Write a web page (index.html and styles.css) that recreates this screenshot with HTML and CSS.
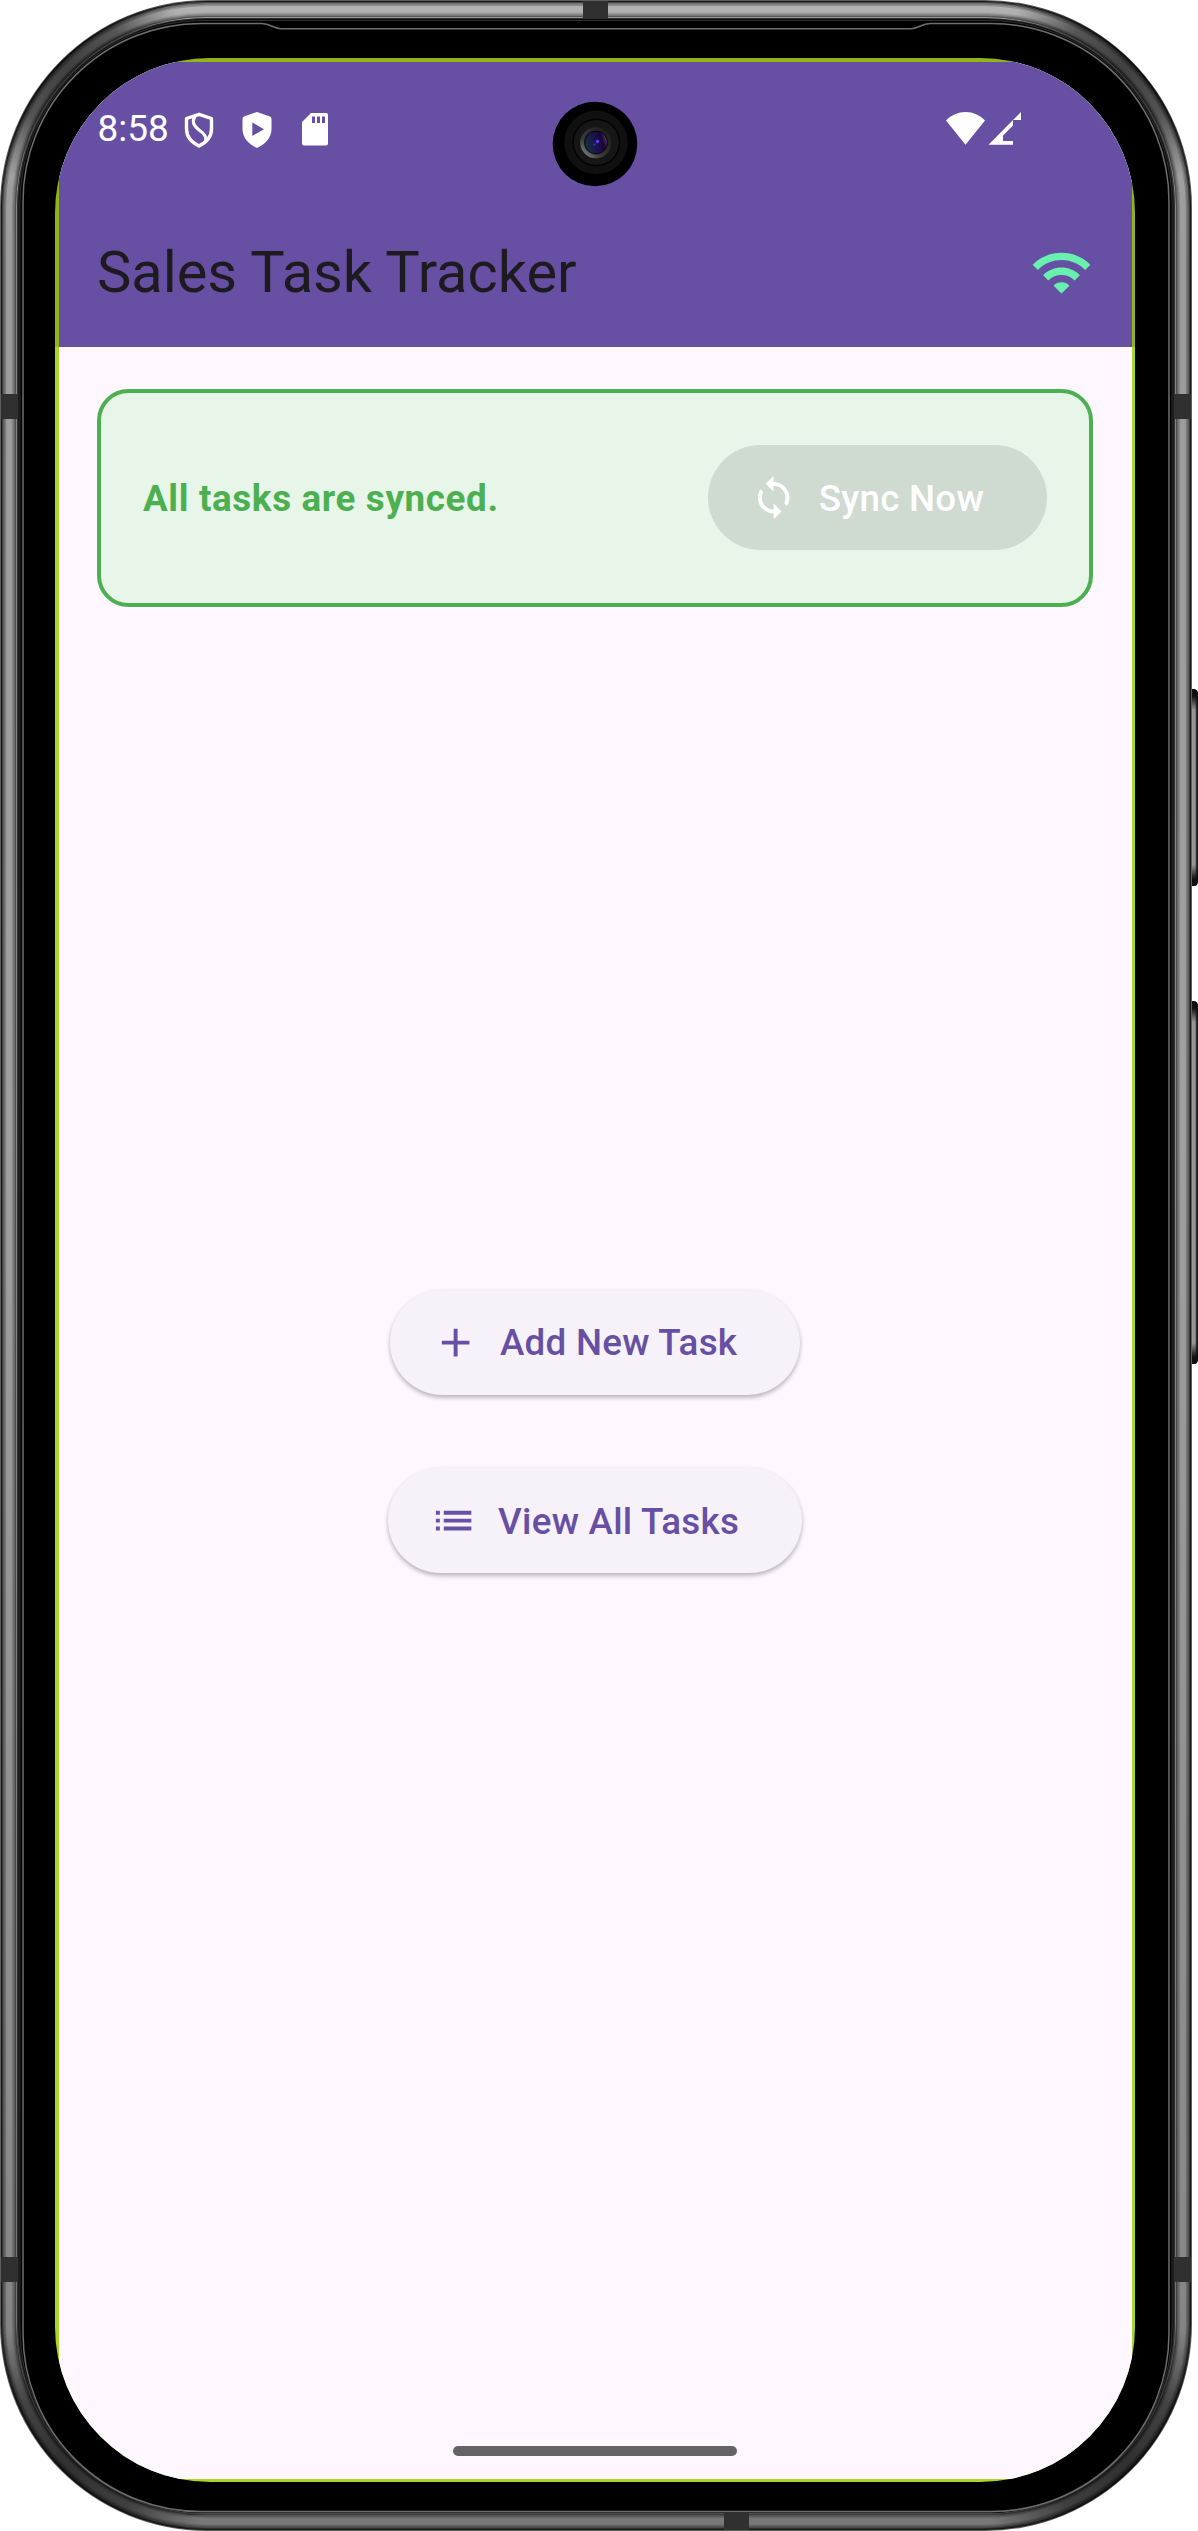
FILE: index.html
```html
<!DOCTYPE html>
<html lang="en">
<head>
<meta charset="utf-8">
<title>Sales Task Tracker</title>
<link rel="stylesheet" href="styles.css">
</head>
<body>
<div class="phone">
  <svg class="frame" viewBox="0 0 1198 2531" aria-hidden="true">
    <defs>
      <linearGradient id="metal" x1="0" y1="0" x2="0" y2="1">
        <stop offset="0" stop-color="#b6b6b6"/>
        <stop offset=".012" stop-color="#a4a4a4"/>
        <stop offset=".1" stop-color="#9c9c9c"/>
        <stop offset=".45" stop-color="#a0a0a0"/>
        <stop offset=".9" stop-color="#888"/>
        <stop offset="1" stop-color="#787878"/>
      </linearGradient>
      <radialGradient id="shade">
        <stop offset="0" stop-color="#000" stop-opacity=".62"/>
        <stop offset=".5" stop-color="#000" stop-opacity=".48"/>
        <stop offset="1" stop-color="#000" stop-opacity="0"/>
      </radialGradient>
      <clipPath id="shell"><rect x="1" y="0" width="1190.5" height="2530.5" rx="207"/></clipPath>
      <linearGradient id="key" x1="0" x2="1" y1="0" y2="0">
        <stop offset="0" stop-color="#555"/><stop offset=".2" stop-color="#9a9a9a"/>
        <stop offset=".65" stop-color="#929292"/><stop offset=".8" stop-color="#333"/><stop offset="1" stop-color="#111"/>
      </linearGradient>
      <linearGradient id="capTop" x1="0" x2="0" y1="0" y2="1">
        <stop offset="0" stop-color="#0a0a0a"/><stop offset=".35" stop-color="#111"/><stop offset="1" stop-color="#111" stop-opacity="0"/>
      </linearGradient>
      <linearGradient id="capBottom" x1="0" x2="0" y1="1" y2="0">
        <stop offset="0" stop-color="#0a0a0a"/><stop offset=".35" stop-color="#111"/><stop offset="1" stop-color="#111" stop-opacity="0"/>
      </linearGradient>
    </defs>
    <path d="M1190 689h4q4 0 4 6v185q0 6-4 6h-4zM1190 1001h4q4 0 4 6v351q0 6-4 6h-4z" fill="url(#key)"/>
    <path d="M1190 689h4q4 0 4 6v15h-8z" fill="url(#capTop)"/>
    <path d="M1190 1001h4q4 0 4 6v15h-8z" fill="url(#capTop)"/>
    <path d="M1190 886h4q4 0 4-6v-15h-8z" fill="url(#capBottom)"/>
    <path d="M1190 1364h4q4 0 4-6v-15h-8z" fill="url(#capBottom)"/>
    <rect x="0" y="0" width="1192" height="2531" rx="207" fill="#5c605c"/>
    <rect x="1" y="1" width="1190" height="2529" rx="206" fill="#1c1c1c"/>
    <g clip-path="url(#shell)">
      <rect x="2" y="2" width="1188" height="2527" rx="205" fill="url(#metal)"/>
      <g fill="none" stroke="#000" stroke-width="1.600">
        <rect x="2.500" y="2.500" width="1187" height="2526" rx="204.500" stroke-opacity=".6"/>
        <rect x="4" y="4" width="1184" height="2523" rx="203" stroke-opacity=".35"/>
        <rect x="5.500" y="5.500" width="1181" height="2520" rx="201.500" stroke-opacity=".18"/>
        <rect x="12.500" y="13.500" width="1167" height="2504" rx="194" stroke-opacity=".12"/>
        <rect x="14" y="15" width="1164" height="2501" rx="192" stroke-opacity=".28"/>
        <rect x="15.500" y="16.500" width="1161" height="2498" rx="190" stroke-opacity=".5"/>
      </g>
      <circle cx="60" cy="60" r="125" fill="url(#shade)"/>
      <circle cx="1132" cy="60" r="125" fill="url(#shade)"/>
      <circle cx="60" cy="2471" r="150" fill="url(#shade)"/>
      <circle cx="1132" cy="2471" r="150" fill="url(#shade)"/>
    </g>
    <g fill="#303030">
      <rect x="583" y="1" width="25" height="19"/>
      <rect x="724" y="2513" width="25" height="17"/>
      <rect x="1" y="394" width="18" height="25"/><rect x="1173" y="394" width="18" height="25"/>
      <rect x="1" y="2257" width="18" height="25"/><rect x="1173" y="2257" width="18" height="25"/>
    </g>
    <rect x="17" y="18" width="1158" height="2495.500" rx="188" fill="#303030"/>
    <rect x="18.500" y="19" width="1155" height="2494" rx="186" fill="#0b0b0b"/>
    <rect x="20" y="20.500" width="1152" height="2491.500" rx="183" fill="#000" stroke="#3a3a3a" stroke-width=".8"/>
    <path d="M201 23.500H262C270 23.500 274 28.700 281 28.700H911C918 28.700 922 23.500 930 23.500H991A178 178 0 0 1 1169 201.500V2333.500A178 178 0 0 1 991 2511.500H201A178 178 0 0 1 23 2333.500V201.500A178 178 0 0 1 201 23.500Z" fill="#000" stroke="#6e6e6e" stroke-width="1.500"/>
  </svg>

  <div class="screen">
    <div class="app">
      <header class="header">
        <div class="statusbar">
          <span class="clock">8:58</span>
          <svg class="st-icon st-shield" viewBox="0 0 30 36"><path d="M15 2.300 27.500 6.500V17C27.500 25 22 30.500 15 34 8 30.500 2.500 25 2.500 17V6.500Z" fill="none" stroke="#fff" stroke-width="3.400" stroke-linejoin="round"/><path d="M12 3C7.500 9 9 13 15 18 21 22 23 25 21.500 29" fill="none" stroke="#fff" stroke-width="3.200"/></svg>
          <svg class="st-icon st-play" viewBox="0 0 30 36"><path fill="#fff" fill-rule="evenodd" d="M15 0 28 4.500Q29.500 5 29.500 7V17C29.500 26 23 32.500 15 36 7 32.500.5 26 .5 17V7Q.5 5 2 4.500ZM10.300 10.500V24L22 17.200Z"/></svg>
          <svg class="st-icon st-card" viewBox="0 0 26 33"><path fill="#fff" fill-rule="evenodd" d="M9 0H24Q26 0 26 2V30.500Q26 32.500 24 32.500H2Q0 32.500 0 30.500V9ZM10 3.500V10H13V3.500ZM15 3.500V10H18V3.500ZM20 3.500V10H23V3.500Z"/></svg>
          <svg class="st-signal" viewBox="0 0 75 33"><path fill="#fff" d="M0 8.500Q8 0 19.500 0 31 0 39 8.500L19.500 32.700ZM75 0V8H67V13.500L57 23.500V29H67V32.700H42.500Z"/></svg>
        </div>
        <div class="appbar">
          <h1 class="title">Sales Task Tracker</h1>
          <svg class="wifi" viewBox="0 0 24 24"><path fill="#69F0AE" d="m1 9 2 2c4.970-4.970 13.030-4.970 18 0l2-2C16.930 2.930 7.080 2.930 1 9zm8 8 3 3 3-3c-1.650-1.660-4.340-1.660-6 0zm-4-4 2 2c2.760-2.760 7.240-2.760 10 0l2-2C15.140 9.140 8.870 9.140 5 13z"/></svg>
        </div>
      </header>

      <section class="card">
        <span class="card-text">All tasks are synced.</span>
        <button class="btn btn-sync" disabled>
          <svg class="icon" viewBox="0 0 24 24"><path fill="currentColor" d="M12 4V1L8 5l4 4V6c3.310 0 6 2.690 6 6 0 1.010-.25 1.970-.7 2.800l1.460 1.460C19.540 15.030 20 13.570 20 12c0-4.420-3.580-8-8-8zm0 14c-3.310 0-6-2.690-6-6 0-1.010.25-1.970.7-2.800L5.240 7.740C4.460 8.970 4 10.430 4 12c0 4.420 3.580 8 8 8v3l4-4-4-4v3z"/></svg>
          <span>Sync Now</span>
        </button>
      </section>

      <main class="actions">
        <button class="btn btn-elevated">
          <svg class="icon" viewBox="0 0 24 24"><path fill="currentColor" d="M19 13h-6v6h-2v-6H5v-2h6V5h2v6h6v2z"/></svg>
          <span>Add New Task</span>
        </button>
        <button class="btn btn-elevated">
          <svg class="icon" viewBox="0 0 24 24"><path fill="currentColor" d="M3 13h2v-2H3v2zm0 4h2v-2H3v2zm0-8h2V7H3v2zm4 4h14v-2H7v2zm0 4h14v-2H7v2zM7 7v2h14V7H7z"/></svg>
          <span>View All Tasks</span>
        </button>
      </main>

      <div class="navbar"><div class="handle"></div></div>
    </div>
  </div>

  <svg class="camera" viewBox="0 0 86 86" aria-hidden="true">
    <defs>
      <linearGradient id="ring" x1="0" y1="1" x2="1" y2="0"><stop offset="0" stop-color="#999"/><stop offset=".35" stop-color="#3a3a3a"/><stop offset="1" stop-color="#151515"/></linearGradient>
      <linearGradient id="lens" x1="0" y1=".6" x2="1" y2=".3"><stop offset="0" stop-color="#16323c"/><stop offset=".5" stop-color="#1a1050"/><stop offset=".8" stop-color="#1c0630"/><stop offset="1" stop-color="#6a3a80"/></linearGradient>
    </defs>
    <circle cx="43" cy="43" r="42.300" fill="#000"/>
    <circle cx="44" cy="41.500" r="31.700" fill="#101010"/>
    <circle cx="44.300" cy="41.500" r="24" fill="#020202"/>
    <circle cx="44.300" cy="41.500" r="22.500" fill="#161616"/>
    <circle cx="43.800" cy="41.800" r="15.500" fill="url(#ring)"/>
    <circle cx="44" cy="41.500" r="11.800" fill="#050508"/>
    <circle cx="44" cy="41.500" r="10.800" fill="url(#lens)"/>
    <circle cx="45.500" cy="40.500" r="1.700" fill="#5a3cff"/>
    <circle cx="42.500" cy="43.500" r="1.300" fill="#3a2ac0"/>
  </svg>
</div>
</body>
</html>
```
FILE: styles.css
```css
* { box-sizing: border-box; }
body {
  margin: 0;
  background: #fff;
  font-family: Roboto, "Liberation Sans", sans-serif;
}
.phone {
  position: relative;
  width: 1198px;
  height: 2531px;
  padding: 58px 63px 49px 55px;
  overflow: hidden;
}
.frame {
  position: absolute;
  inset: 0;
  width: 1198px;
  height: 2531px;
}
.screen {
  position: relative;
  width: 1080px;
  height: 2424px;
  padding: 3.500px;
  border-radius: 155px;
  overflow: hidden;
  background: linear-gradient(#93b31a 289px, #a9d62a 289px);
}
.app {
  display: flex;
  flex-direction: column;
  height: 100%;
  background: #fef7ff;
}
.header {
  height: 285.500px;
  flex: none;
  background: #6750a4;
}
.statusbar {
  display: flex;
  align-items: flex-start;
  height: 134px;
  padding: 45px 0 0 39px;
}
.clock {
  width: 86px;
  color: #fff;
  font-size: 37px;
  line-height: 44px;
}
.st-icon { flex: none; margin-top: 5px; }
.st-shield { width: 30px; height: 36px; }
.st-play { width: 30px; height: 36px; margin-left: 28px; }
.st-card { width: 26px; height: 33px; margin: 6.500px 0 0 30px; }
.st-signal { width: 75px; height: 33px; margin: 5.500px 0 0 618.500px; }
.appbar {
  display: flex;
  align-items: center;
  justify-content: space-between;
  height: 151px;
  padding: 2px 39px 0 38.500px;
}
.title {
  margin: 0;
  color: #1d1b20;
  font-size: 57.750px;
  font-weight: 400;
  line-height: 74px;
}
.wifi { width: 63px; height: 63px; }
.card {
  display: flex;
  align-items: center;
  justify-content: space-between;
  flex: none;
  height: 218px;
  margin: 42px 38.500px 0;
  padding: 0 42px;
  border: 4px solid #4caf50;
  border-radius: 31.500px;
  background: #e8f5e9;
}
.card-text {
  color: #4caf50;
  font-size: 36.750px;
  font-weight: 700;
  letter-spacing: .656px;
}
.btn {
  display: flex;
  align-items: center;
  gap: 21px;
  height: 105px;
  padding: 1px 63px 0 42px;
  border: 0;
  border-radius: 53px;
  font-family: inherit;
  font-size: 36.750px;
  font-weight: 500;
  letter-spacing: .263px;
  white-space: nowrap;
}
.icon { width: 47.250px; height: 47.250px; flex: none; }
.btn-sync { margin-bottom: 1px; background: #cfdad0; color: #fff; }
.btn-elevated {
  background: #f7f2fa;
  color: #6750a4;
  box-shadow: 0 3px 4px rgba(0, 0, 0, .22), 0 1px 5px rgba(0, 0, 0, .08);
}
.actions {
  display: flex;
  flex: 1;
  flex-direction: column;
  align-items: center;
  gap: 73.500px;
  padding-top: 682.500px;
}
.navbar {
  display: flex;
  justify-content: center;
  flex: none;
  height: 32.500px;
}
.handle {
  width: 284px;
  height: 10px;
  border-radius: 5px;
  background: #666366;
}
.camera {
  position: absolute;
  left: 551.500px;
  top: 101px;
  width: 86px;
  height: 86px;
}
```
